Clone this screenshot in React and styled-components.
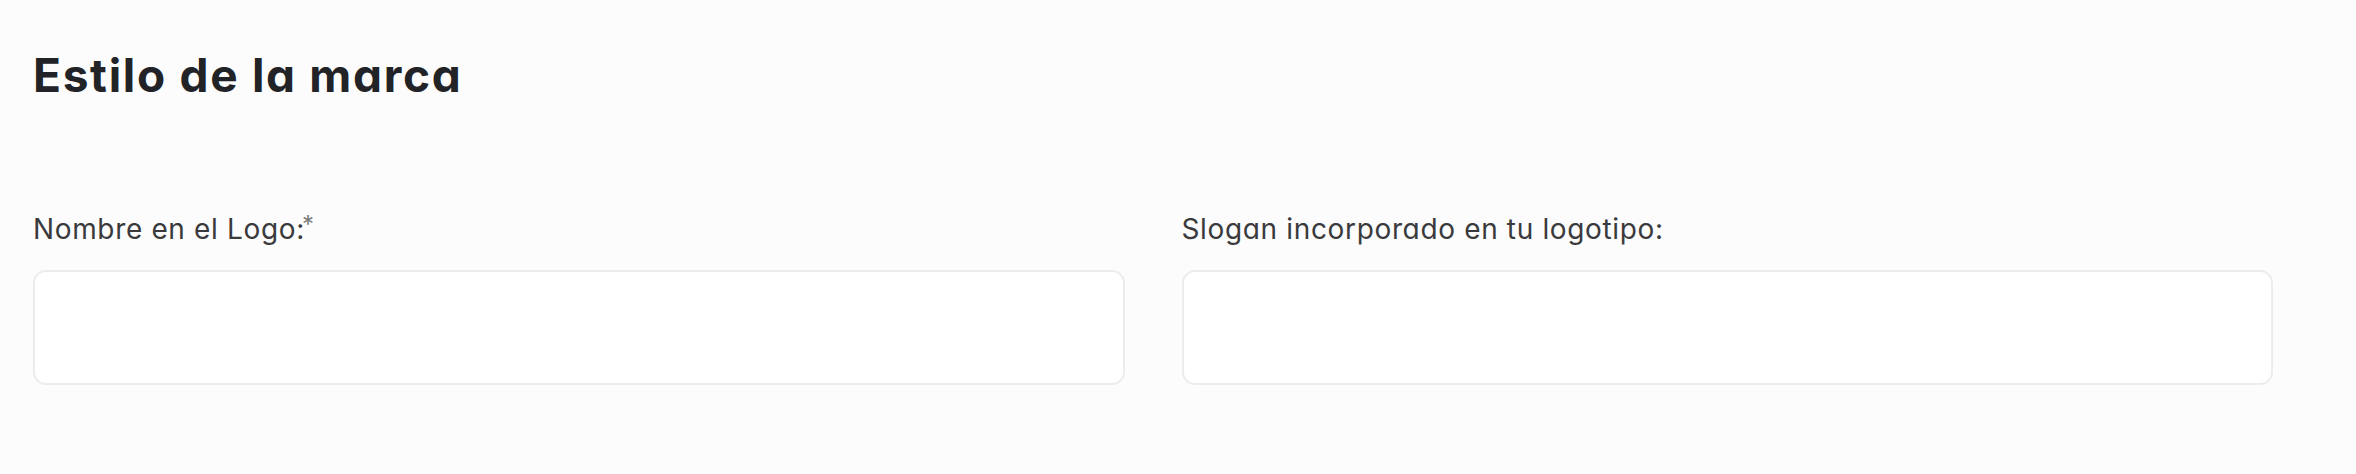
import styled, { createGlobalStyle } from "styled-components";

const GlobalStyle = createGlobalStyle`
    html, body {
        margin: 0;
        padding: 0;
        background: #fcfcfc;
    }

    body {
        font-family: Inter, "Noto Sans", "Liberation Sans", sans-serif;
        font-feature-settings: "cv11" 1;
    }
`;

const fields = [
    { name: "nombre", label: "Nombre en el Logo:", required: true },
    { name: "slogan", label: "Slogan incorporado en tu logotipo:", required: false }
];

const App = () => {
    return (
        <>
            <GlobalStyle />
            <Page>
                <Title>Estilo de la marca</Title>
                <Grid>
                    {fields.map((field) => (
                        <Field key={field.name}>
                            <Label htmlFor={field.name}>
                                {field.label}
                                {field.required && <Star>*</Star>}
                            </Label>
                            <Input id={field.name} name={field.name} type="text" />
                        </Field>
                    ))}
                </Grid>
            </Page>
        </>
    );
};

export default App;

const Page = styled.div`
    box-sizing: border-box;
    width: 2356px;
    height: 474px;
    padding: 52px 83px 0 33px;
`;

const Title = styled.h1`
    margin: 0;
    font-size: 46px;
    line-height: 46px;
    font-weight: 700;
    letter-spacing: 1.7px;
    color: #212327;
`;

const Grid = styled.div`
    display: grid;
    grid-template-columns: 1fr 1fr;
    column-gap: 57px;
    margin-top: 117px;
`;

const Field = styled.div`
    display: flex;
    flex-direction: column;
    gap: 27px;
`;

const Label = styled.label`
    font-size: 28px;
    line-height: 28px;
    font-weight: 400;
    letter-spacing: 0.65px;
    color: #3a3a3c;
`;

const Star = styled.span`
    color: #7d7d7d;
    font-size: 24px;
    line-height: 20px;
    letter-spacing: 0;
    vertical-align: top;
    margin-left: -3px;
`;

const Input = styled.input`
    box-sizing: border-box;
    height: 115px;
    width: 100%;
    border: 2px solid #ececec;
    border-radius: 13px;
    background: #ffffff;
    outline: none;
`;
